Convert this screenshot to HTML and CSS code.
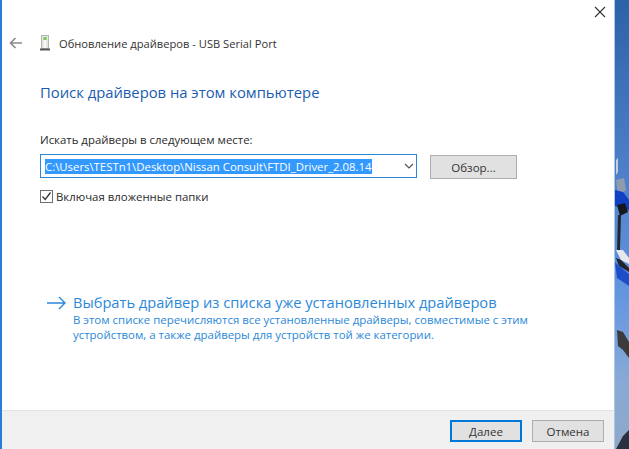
FILE: index.html
```html
<!DOCTYPE html>
<html lang="ru">
<head>
<meta charset="utf-8">
<title>Обновление драйверов</title>
<link rel="stylesheet" href="styles.css">
</head>
<body>
<div class="desktop">
  <div class="window">
    <div class="content">
      <div class="close-row">
        <svg class="close-icon" width="12" height="12" viewBox="0 0 12 12"><path d="M1 1 L11 11 M11 1 L1 11" stroke="#333" stroke-width="1.1" fill="none"/></svg>
      </div>
      <div class="title-row">
        <svg class="back-icon" width="14" height="12" viewBox="0 0 14 12"><path d="M13 6 H1.5 M6.5 1 L1.5 6 L6.5 11" stroke="#8a8a8a" stroke-width="1.6" fill="none"/></svg>
        <svg class="device-icon" width="12" height="16" viewBox="0 0 12 16">
          <rect x="2.5" y="0.5" width="7" height="13" fill="#e4e6e2" stroke="#b4b8b2"/>
          <rect x="4.5" y="2" width="3" height="3" fill="#7fc45a"/>
          <rect x="5" y="5" width="2" height="8" fill="#fafafa"/>
          <rect x="1" y="13.5" width="10" height="2" fill="#55585a"/>
        </svg>
        <span class="window-title">Обновление драйверов - USB Serial Port</span>
      </div>
      <h1 class="heading">Поиск драйверов на этом компьютере</h1>
      <div class="label">Искать драйверы в следующем месте:</div>
      <div class="path-row">
        <div class="combo">
          <span class="selected">C:\Users\TESTn1\Desktop\Nissan Consult\FTDI_Driver_2.08.14</span>
          <svg class="chevron" width="10" height="6" viewBox="0 0 10 6"><path d="M1 1 L5 5 L9 1" stroke="#555" stroke-width="1.2" fill="none"/></svg>
        </div>
        <div class="btn browse">Обзор...</div>
      </div>
      <div class="check-row">
        <span class="checkbox"><svg width="11" height="11" viewBox="0 0 11 11"><path d="M1.5 5.5 L4.2 8.5 L9.5 1.5" stroke="#333" stroke-width="1.3" fill="none"/></svg></span>
        <span class="check-label">Включая вложенные папки</span>
      </div>
      <div class="link-block">
        <svg class="link-arrow" width="20" height="14" viewBox="0 0 20 14"><path d="M0 7 H18 M12 1 L18 7 L12 13" stroke="#2b88d8" stroke-width="1.4" fill="none"/></svg>
        <div class="link-text">
          <div class="link-title">Выбрать драйвер из списка уже установленных драйверов</div>
          <div class="link-desc">В этом списке перечисляются все установленные драйверы, совместимые с этим<br>устройством, а также драйверы для устройств той же категории.</div>
        </div>
      </div>
    </div>
    <div class="footer">
      <div class="btn primary">Далее</div>
      <div class="btn cancel">Отмена</div>
    </div>
  </div>
  <div class="wallpaper">
    <svg width="14" height="449" viewBox="0 0 14 449">
      <path d="M1 160 L3 158 L3 172 L1 175 Z" fill="#c4d0e0"/>
      <path d="M1 180 L9 178 L11 190 L3 196 Z" fill="#8e9cb0"/>
      <path d="M0 190 L8 192 L14 200 L14 210 L0 206 Z" fill="#1240c4"/>
      <path d="M2 205 L10 203 L13 212 L5 216 Z" fill="#16181e"/>
      <path d="M3 215 L6 215 L5 250 L2 252 Z" fill="#23262c"/>
      <path d="M1 250 L8 250 L14 258 L14 264 L6 260 Z" fill="#e6e8ee"/>
      <path d="M1 258 L6 260 L14 268 L14 272 L4 266 Z" fill="#20242c"/>
      <path d="M0 262 L4 266 L14 274 L14 286 L2 278 Z" fill="#1c4ec8"/>
      <path d="M2 330 L8 332 L14 342 L14 358 L8 350 L3 346 Z" fill="#3c3a3a"/>
      <path d="M14 430 L14 449 L1 449 L8 436 Z" fill="#2a3040"/>
    </svg>
  </div>
</div>
</body>
</html>
```
FILE: styles.css
```css
html, body { margin: 0; padding: 0; }
body { width: 629px; height: 449px; overflow: hidden; font-family: "Open Sans", "Noto Sans", sans-serif; }
.desktop { display: flex; width: 629px; height: 449px; }
.window { flex: 0 0 612px; display: flex; flex-direction: column; background: #fff; border-left: 2px solid #2b7cd3; }
.content { flex: 1; display: flex; flex-direction: column; padding-left: 5px; }
.close-row { display: flex; justify-content: flex-end; padding: 6px 8px 0 0; height: 14px; }
.title-row { display: flex; align-items: center; margin-top: 15px; height: 16px; color: #333; }
.back-icon { margin-left: 2px; }
.device-icon { margin-left: 16px; }
.window-title { margin-left: 8px; font-size: 11.15px; color: #333; }
.heading { margin: 31px 0 0 33px; font-size: 14.8px; font-weight: 400; color: #1a5cb0; line-height: 20px; }
.label { margin: 31px 0 0 33px; font-size: 11.4px; line-height: 14px; color: #2b2b2b; }
.path-row { display: flex; align-items: flex-start; margin: 7px 0 0 33px; }
.combo { width: 377px; height: 24px; box-sizing: border-box; border: 1px solid #2b88d8; display: flex; align-items: center; justify-content: space-between; padding: 0 2px 0 4px; }
.selected { background: #3399ff; color: #fff; font-size: 11.36px; line-height: 15px; white-space: nowrap; }
.chevron { margin-right: 0; }
.btn { display: flex; align-items: center; justify-content: center; box-sizing: border-box; background: #e1e1e1; border: 1px solid #adadad; font-size: 11.5px; color: #333; }
.browse { width: 87px; height: 24px; margin: 1px 0 0 13px; }
.check-row { display: flex; align-items: center; margin: 10px 0 0 33px; }
.checkbox { width: 13px; height: 13px; box-sizing: border-box; border: 1px solid #6f6f6f; display: flex; align-items: center; justify-content: center; }
.check-label { margin-left: 3px; font-size: 11.4px; color: #2b2b2b; }
.link-block { display: flex; margin: 88px 0 0 40px; }
.link-arrow { margin-top: 4px; }
.link-text { margin-left: 6px; }
.link-title { font-size: 14.65px; line-height: 20px; color: #2b88d8; }
.link-desc { font-size: 11.43px; line-height: 15px; color: #2b88d8; }
.footer { height: 39px; box-sizing: border-box; background: #f0f0f0; border-top: 1px solid #e3e3e3; display: flex; justify-content: flex-end; align-items: flex-start; padding: 9px 10px 0 0; gap: 10px; }
.primary { width: 72px; height: 22px; border: 2px solid #0078d7; }
.cancel { width: 72px; height: 22px; }
.wallpaper { flex: 0 0 14px; height: 449px; border-left: 1px solid #a8c8e8; overflow: hidden; background: linear-gradient(180deg, #2c62a8 0%, #4a7cc6 33%, #6496e0 66%, #88aad6 85%, #8fa8c8 100%); }
.wallpaper svg { display: block; }
```
